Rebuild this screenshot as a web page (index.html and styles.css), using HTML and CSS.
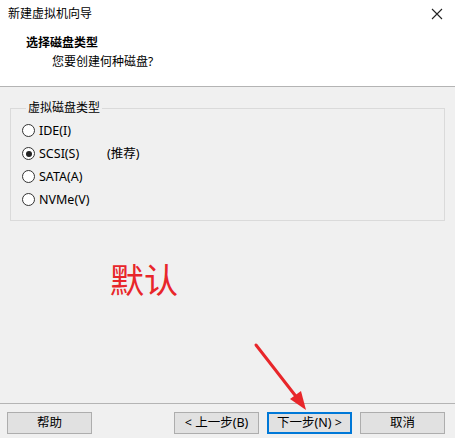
FILE: index.html
```html
<!DOCTYPE html>
<html lang="zh-CN">
<head>
<meta charset="utf-8">
<link rel="stylesheet" href="styles.css">
</head>
<body>
<div class="dialog">
  <div class="header">
    <div class="titlebar">
      <span class="title">新建虚拟机向导</span>
      <svg class="close" width="12" height="12" viewBox="0 0 12 12"><path d="M1 1L11 11M11 1L1 11" stroke="#222" stroke-width="1.1"/></svg>
    </div>
    <div class="heading">选择磁盘类型</div>
    <div class="subheading">您要创建何种磁盘?</div>
  </div>
  <div class="main">
    <fieldset class="group">
      <legend>虚拟磁盘类型</legend>
      <div class="radio"><span class="dot"></span><span>IDE(I)</span></div>
      <div class="radio"><span class="dot checked"></span><span class="label">SCSI(S)</span><span class="rec">(推荐)</span></div>
      <div class="radio"><span class="dot"></span><span>SATA(A)</span></div>
      <div class="radio"><span class="dot"></span><span>NVMe(V)</span></div>
    </fieldset>
    <div class="note">默认</div>
  </div>
  <div class="footer">
    <button class="btn">帮助</button>
    <div class="spacer"></div>
    <button class="btn">&lt; 上一步(B)</button>
    <button class="btn primary">下一步(N) &gt;</button>
    <button class="btn">取消</button>
  </div>
  <svg class="arrow" width="455" height="438" viewBox="0 0 455 438">
    <line x1="256" y1="345" x2="298" y2="399" stroke="#e8262a" stroke-width="3" stroke-linecap="round"/>
    <polygon points="306,410 290,399 301,391" fill="#e8262a"/>
  </svg>
</div>
</body>
</html>
```
FILE: styles.css
```css
html, body {
  margin: 0;
  padding: 0;
}
body {
  width: 455px;
  height: 438px;
  background: #f0f0f0;
  font-family: "Noto Sans", "Noto Sans CJK SC", sans-serif;
  font-size: 12px;
  color: #000;
  overflow: hidden;
}
.dialog {
  position: relative;
  width: 455px;
  height: 438px;
  display: flex;
  flex-direction: column;
}
.header {
  background: #fff;
  height: 86px;
  border-bottom: 1px solid #b4b4b4;
  box-sizing: content-box;
}
.titlebar {
  height: 29px;
  display: flex;
  align-items: center;
  justify-content: space-between;
  padding: 0 12px 0 8px;
}
.title {
  font-size: 12px;
  line-height: 14px;
  margin-top: -1px;
}
.close {
  margin-top: -2px;
}
.heading {
  font-weight: bold;
  padding-left: 26px;
  line-height: 16px;
  margin-top: 6px;
}
.subheading {
  padding-left: 52px;
  line-height: 16px;
  margin-top: 3px;
}
.main {
  flex: 1;
  padding: 10px 10px 0 10px;
  display: flex;
  flex-direction: column;
}
.group {
  margin: 4px 0 0 0;
  padding: 4px 0 8px 11px;
  border: 1px solid #dadada;
  height: 120px;
  box-sizing: border-box;
  min-width: 0;
}
.group legend {
  padding: 0 2px;
  margin-left: 4px;
  line-height: 14px;
}
.radio {
  display: flex;
  align-items: center;
  height: 23px;
  line-height: 16px;
  font-size: 12.5px;
}
.dot {
  width: 11px;
  height: 11px;
  border: 1px solid #333;
  border-radius: 50%;
  background: #fff;
  margin-right: 4px;
  position: relative;
  flex: none;
}
.dot.checked::after {
  content: "";
  position: absolute;
  left: 2.5px;
  top: 2.5px;
  width: 6px;
  height: 6px;
  border-radius: 50%;
  background: #222;
}
.label {
  width: 68px;
}
.note {
  color: #e8262a;
  font-family: "Noto Sans CJK SC", sans-serif;
  font-size: 34px;
  line-height: 40px;
  margin: 38px 0 0 100px;
}
.footer {
  border-top: 1px solid #b4b4b4;
  height: 35px;
  display: flex;
  align-items: flex-start;
  padding: 8px 10px 0 7px;
  box-sizing: border-box;
  gap: 8px;
}
.spacer {
  flex: 1;
}
.btn {
  width: 85px;
  height: 22px;
  border: 1px solid #adadad;
  background: #e1e1e1;
  font-family: "Noto Sans", "Noto Sans CJK SC", sans-serif;
  font-size: 12.5px;
  padding: 0;
  color: #000;
  line-height: 18px;
}
.btn.primary {
  border: 1px solid #0078d7;
  box-shadow: inset 0 0 0 1px #0078d7;
}
.arrow {
  position: absolute;
  left: 0;
  top: 0;
  pointer-events: none;
}
```
